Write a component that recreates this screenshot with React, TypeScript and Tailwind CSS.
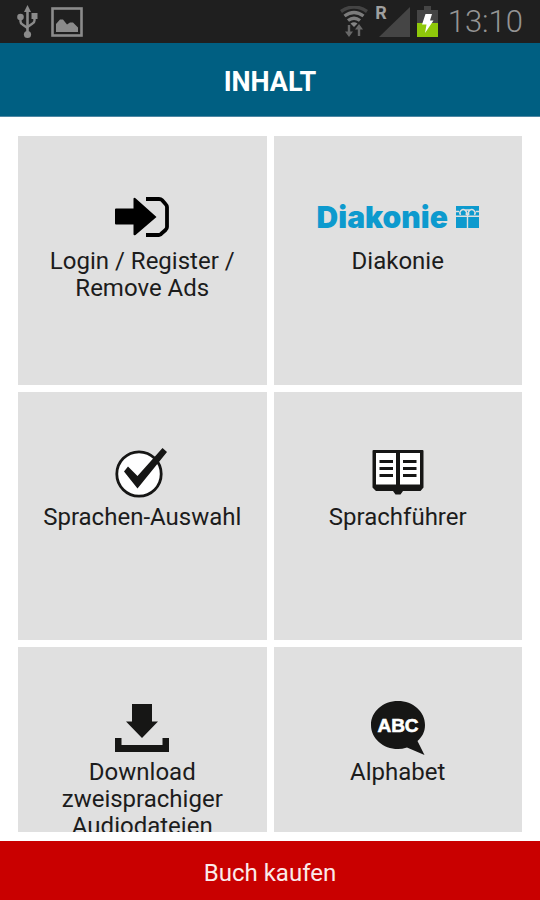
import type { ReactNode } from 'react';

interface Tile {
  label: string;
  href: string;
  icon: ReactNode;
}

function UsbIcon() {
  return (
    <svg width="22" height="34" viewBox="0 0 22 34" fill="none" stroke="#8b8b8b" strokeWidth="2" aria-hidden="true">
      <path d="M10.500 5V29" strokeWidth="2.600" />
      <path d="M3.500 13v3.500q0 2 2 3l5 3.500M17.500 11v4.500q0 2-2 3l-5 3.500" strokeWidth="2.400" />
      <path d="M10.500 0l3.500 7H7z" fill="#8b8b8b" stroke="none" />
      <circle cx="3.500" cy="12" r="3.300" fill="#8b8b8b" stroke="none" />
      <path d="M14.500 8h6v6h-6z" fill="#8b8b8b" stroke="none" />
      <circle cx="10.500" cy="29.500" r="3.600" fill="#8b8b8b" stroke="none" />
    </svg>
  );
}

function GalleryIcon() {
  return (
    <svg width="32" height="30" viewBox="0 0 32 30" aria-hidden="true">
      <rect x="1.500" y="1.500" width="29" height="27" fill="none" stroke="#8b8b8b" strokeWidth="2.600" />
      <path d="M5 25v-8l4-4.500h3l4 5 3-2h3l5 5V25z" fill="#8b8b8b" />
    </svg>
  );
}

function WifiIcon() {
  return (
    <svg width="28" height="32" viewBox="0 0 28 32" fill="none" aria-hidden="true">
      <path d="M1 5.500Q14-3.500 27 5.500" stroke="#444" strokeWidth="3.400" />
      <path d="M4.500 10Q14 3 23.500 10M8 14.500q6-4.500 12 0" stroke="#7c7c7c" strokeWidth="3.400" />
      <path d="M10.500 17.500q3.500-2.500 7 0L14 21z" fill="#858585" />
      <path d="M9 19v9M19 30v-9" stroke="#686868" strokeWidth="2.400" />
      <path d="M5 25.500h8L9 31zM15 23.500h8L19 18z" fill="#686868" />
    </svg>
  );
}

function SignalIcon() {
  return (
    <svg width="31" height="30" viewBox="0 0 31 30" aria-hidden="true">
      <path d="M31 0v30H0z" fill="#454545" />
    </svg>
  );
}

function BatteryIcon() {
  return (
    <svg width="21" height="31" viewBox="0 0 21 31" aria-hidden="true">
      <path d="M7 0h7v4h7v27H0V4h7z" fill="#454545" />
      <path d="M0 17h21v14H0z" fill="#8fc80a" />
      <path d="M8.500 8h6.500l-2 6.500h3.500L8 27l1.500-8.500H5z" fill="#fff" />
    </svg>
  );
}

function LoginIcon() {
  return (
    <svg width="54" height="40" viewBox="0 0 54 40" aria-hidden="true">
      <path d="M0 12.500q0-1 1-1h17.500V2q0-2 2-.8L41.500 20 20.500 38q-2 1-2-1v-9.500H1q-1 0-1-1z" fill="#000" />
      <path d="M31 2h13q2 0 3 1l3.500 4q1.500 1.500 1.500 3v20q0 1.500-1.500 3L47 36q-1.500 2-3 2H31" fill="none" stroke="#000" strokeWidth="3.800" />
    </svg>
  );
}

function DiakonieLogo() {
  return (
    <span className="flex items-center gap-2 text-[#0d9ace]" aria-hidden="true">
      <span className="font-[Inter,sans-serif] text-3xl leading-8 font-black">Diakonie</span>
      <svg width="23" height="22" viewBox="0 0 23 22">
        <path d="M0 0h23v9.500H0zM0 11h10.800v11H0zM12.200 11H23v11H12.200z" fill="currentColor" />
        <path
          d="M0 5.500h3M23 5.500h-3M4.500 8.800a3.300 3.300 0 1 1 5.500 0M13 8.800a3.300 3.300 0 1 1 5.500 0M9 4h5M11.500 7.500V11"
          fill="none"
          stroke="#e0e0e0"
          strokeWidth="1.500"
        />
      </svg>
    </span>
  );
}

function CheckIcon() {
  return (
    <svg width="54" height="52" viewBox="0 0 54 52" aria-hidden="true">
      <circle cx="24" cy="28" r="22.200" fill="#fff" stroke="#161615" strokeWidth="2.800" />
      <path d="M9 25.500l4-5L22.500 30 47.500 2l4.500 4L22.500 42.500z" fill="#161615" />
    </svg>
  );
}

function BookIcon() {
  return (
    <svg width="52" height="46" viewBox="0 0 52 46" aria-hidden="true">
      <path d="M1.500 1h49q1 0 1 1v36.500l-3 3.500H31l-2.500 3.500h-5L21 42H4L.5 38.500V2q0-1 1-1z" fill="#161615" />
      <path d="M4 4h20v31.500H4zM28 4h20v31.500H28z" fill="#fff" />
      <path d="M7.500 12.500H21M7.500 19.500H21M7.500 26.500H21M31 12.500h13.500M31 19.500h13.500M31 26.500h13.500" stroke="#161615" strokeWidth="3" />
    </svg>
  );
}

function DownloadIcon() {
  return (
    <svg width="54" height="48" viewBox="0 0 54 48" fill="#161615" aria-hidden="true">
      <path d="M17 0h20v17.500H43L27 34 11 17.500h6z" />
      <path d="M0 34h6.500v7h41v-7H54v14H0z" />
    </svg>
  );
}

function AbcIcon() {
  return (
    <svg width="54" height="54" viewBox="0 0 54 54" aria-hidden="true">
      <path d="M27 0C42 0 54 10.500 54 24c0 7-3 12-7.500 16L53.500 54 36 46.500Q31 48 27 48C12 48 0 37.500 0 24S12 0 27 0z" fill="#161615" />
      <text
        x="27"
        y="31"
        textAnchor="middle"
        fill="#fff"
        stroke="#fff"
        strokeWidth="0.6"
        className="font-['Liberation_Sans',Arial,sans-serif] text-[19px] font-bold"
      >
        ABC
      </text>
    </svg>
  );
}

const tiles: Tile[] = [
  { label: 'Login / Register / Remove Ads', href: '#login', icon: <LoginIcon /> },
  { label: 'Diakonie', href: '#diakonie', icon: <DiakonieLogo /> },
  { label: 'Sprachen-Auswahl', href: '#sprachen', icon: <CheckIcon /> },
  { label: 'Sprachführer', href: '#sprachfuehrer', icon: <BookIcon /> },
  { label: 'Download zweisprachiger Audiodateien', href: '#download', icon: <DownloadIcon /> },
  { label: 'Alphabet', href: '#alphabet', icon: <AbcIcon /> },
];

function StatusBar() {
  return (
    <div className="flex h-[43px] shrink-0 items-center justify-between bg-[#1f1f1f] px-[17px]">
      <div className="flex items-center gap-3">
        <UsbIcon />
        <GalleryIcon />
      </div>
      <div className="flex items-center gap-[7px]">
        <WifiIcon />
        <div className="flex items-center">
          <span className="-mr-2 self-start text-lg leading-3 font-bold text-[#a0a0a0]">R</span>
          <SignalIcon />
        </div>
        <BatteryIcon />
        <time className="pl-[3px] text-[31px] leading-8 font-light text-[#949494]">13:10</time>
      </div>
    </div>
  );
}

export default function App() {
  return (
    <div className="flex h-screen flex-col bg-white font-[Roboto,sans-serif]">
      <StatusBar />
      <header className="flex h-[74px] shrink-0 items-center justify-center border-b border-[#4f87a3] bg-[#005f82] pt-1">
        <h1 className="text-[27px] leading-8 font-bold text-white">INHALT</h1>
      </header>

      <main className="mt-[19px] mb-[9px] min-h-0 flex-1 overflow-x-hidden overflow-y-auto px-[18px] [scrollbar-width:none]">
        <nav className="grid grid-cols-2 gap-[7px]">
          {tiles.map((tile) => (
            <a
              key={tile.href}
              href={tile.href}
              className="flex aspect-square flex-col items-center bg-[#e0e0e0] px-6 pt-[50px] text-center text-2xl leading-[27px] text-[#1c1c1c]"
            >
              <span className="flex h-[61px] shrink-0 items-center justify-center">{tile.icon}</span>
              <span className="pt-px">{tile.label}</span>
            </a>
          ))}
        </nav>
      </main>

      <button type="button" className="h-[59px] shrink-0 bg-[#c90000] pt-1 text-2xl text-[#fbeaea]">
        Buch kaufen
      </button>
    </div>
  );
}
